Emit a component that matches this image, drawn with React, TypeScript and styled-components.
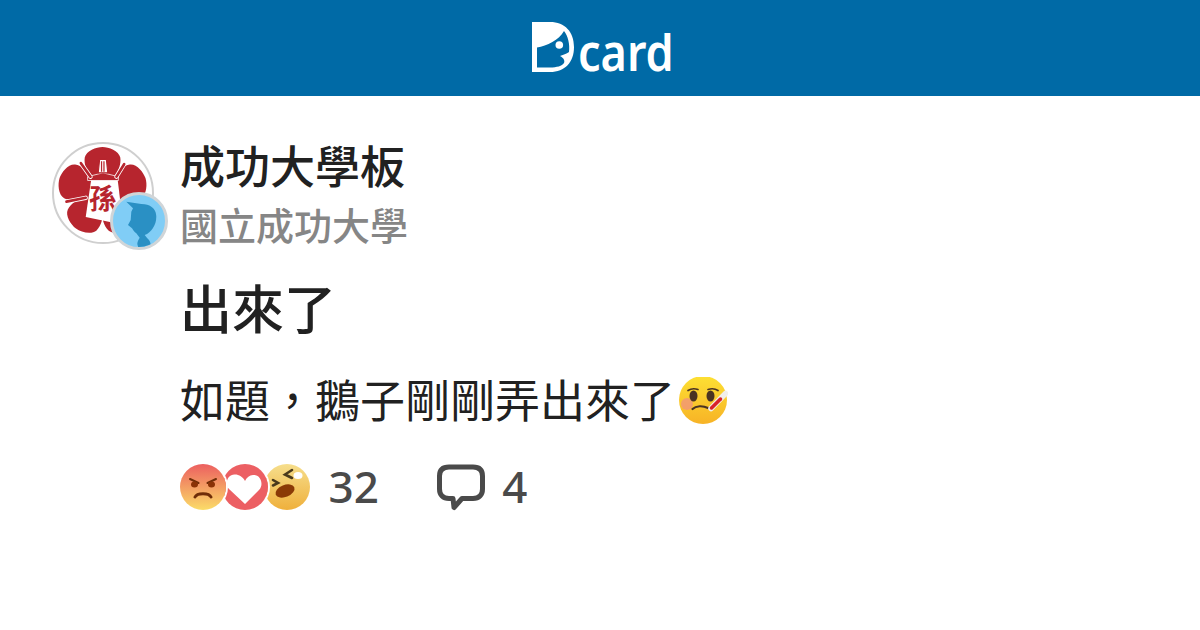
import React from "react";
import styled, { createGlobalStyle } from "styled-components";

const GlobalStyle = createGlobalStyle`
  html, body {
    margin: 0;
    padding: 0;
    background: #fff;
    font-family: "Noto Sans CJK TC", "Noto Sans", sans-serif;
  }
`;

const DcardLogo = () => (
  <LogoMark viewBox="0 0 42 50" aria-hidden="true">
    <path
      fill="#fff"
      fillRule="evenodd"
      d="M0 0H18C33 0 42 10 42 25C42 40 33 50 18 50H0ZM5 25.600V45.500H18C25 45.500 30 44 32 41C33 39 32 36 28 34C33 32 36 31 37 30C38 22 36 14 32 9C27 18 15 24 5 25.600Z"
    />
    <circle cx="27.300" cy="23" r="3.800" fill="#fff" />
  </LogoMark>
);

const SchoolLogo = () => (
  <svg viewBox="0 0 102 102" width="100%" height="100%" aria-hidden="true">
    {[0, 72, 144, 216, 288].map((deg) => (
      <path
        key={deg}
        transform={`rotate(${deg} 50.5 50)`}
        fill="#b7252e"
        d="M50.5 50C43 40 30 28 32 14C33.500 7 44 3 50.500 3C57 3 67.500 7 69 14C71 28 58 40 50.500 50Z"
      />
    ))}
    <path d="M39 35L66 35L72 84L33 76Z" fill="#fff" />
    <path d="M35 34L51 30L67 34L67 38L35 38Z" fill="#b7252e" stroke="#fff" strokeWidth="0.8" />
    <path d="M46 30L47.500 16H54.500L56 30Z" fill="#fff" stroke="#b7252e" strokeWidth="1.2" />
    <path d="M49.500 18V29M52 18V29" stroke="#b7252e" strokeWidth="1.300" />
    <path
      d="M28 20L38 34M73 21L65 34M13 60L33 56"
      stroke="#fff"
      strokeWidth="4.500"
      strokeLinecap="round"
    />
    <path
      d="M28 20L38 34M73 21L65 34M13 60L33 56"
      stroke="#b7252e"
      strokeWidth="2.800"
      strokeLinecap="round"
    />
    <text
      x="51"
      y="68"
      textAnchor="middle"
      fontSize="29"
      fontWeight="700"
      fill="#b7252e"
      fontFamily="'Noto Sans CJK TC', sans-serif"
    >
      孫
    </text>
  </svg>
);

const UserSilhouette = () => (
  <svg viewBox="0 0 52 52" width="100%" height="100%" aria-hidden="true">
    <path
      fill="#2a90c4"
      d="M13.300 6.700L28.300 9C33 9 36 10 38.300 11.700C42 14 43.300 18 43.300 21.700C43.300 26 42 30 40 33C38 36 35 39 31.700 40L34.300 43.300C36 45 37.700 47 37.700 50L35.700 54H25.700L24.300 49C24.300 47 25.500 44.500 26.700 42.700L23.300 38.300C21.500 37 20 35 19 33.300L15 30L17.700 25L18.300 16.700L20 13.300Z"
    />
  </svg>
);

const AngryFace = () => (
  <svg viewBox="0 0 46 46" width="100%" height="100%" aria-hidden="true">
    <defs>
      <linearGradient id="angry" x1="0" y1="0" x2="0" y2="1">
        <stop offset="0" stopColor="#ec5f60" />
        <stop offset="1" stopColor="#fbdc68" />
      </linearGradient>
    </defs>
    <circle cx="23" cy="23" r="23" fill="url(#angry)" />
    <path d="M10 15L18.500 19M36 15L27.500 19" stroke="#6f2d08" strokeWidth="2" strokeLinecap="round" />
    <ellipse cx="14.500" cy="20.500" rx="3.500" ry="3" fill="#8a3206" />
    <ellipse cx="31.500" cy="20.500" rx="3.500" ry="3" fill="#8a3206" />
    <path d="M15 33C17 28.500 29 28.500 31 33" fill="none" stroke="#6f2d08" strokeWidth="3" strokeLinecap="round" />
  </svg>
);

const HeartFace = () => (
  <svg viewBox="0 0 46 46" width="100%" height="100%" aria-hidden="true">
    <circle cx="23" cy="23" r="23" fill="#ec5f63" />
    <path
      fill="#fff"
      d="M23 40L7 25C2 19 6 10 13 10.500C17 10.500 21 13 23 17C25 13 28 10.500 32 11C39 11 42 21 37 26Z"
    />
  </svg>
);

const LaughFace = () => (
  <svg viewBox="0 0 46 46" width="100%" height="100%" aria-hidden="true">
    <defs>
      <linearGradient id="laugh" x1="0" y1="0" x2="0" y2="1">
        <stop offset="0" stopColor="#f6de8c" />
        <stop offset="1" stopColor="#efb03c" />
      </linearGradient>
    </defs>
    <circle cx="23" cy="23" r="23" fill="url(#laugh)" />
    <ellipse cx="34" cy="11.500" rx="4.500" ry="3.500" fill="#fff" />
    <path d="M28 6L21 10.500L28 14M9 16L14 19L9 21.500" fill="none" stroke="#4a3a1c" strokeWidth="2.600" strokeLinecap="round" />
    <ellipse cx="21" cy="27" rx="10" ry="6" transform="rotate(-22 21 27)" fill="#8a3a06" />
  </svg>
);

const FeverFace = () => (
  <svg viewBox="0 0 50 50" width="100%" height="100%" aria-hidden="true">
    <defs>
      <linearGradient id="fever" x1="0" y1="0" x2="0" y2="1">
        <stop offset="0" stopColor="#fde033" />
        <stop offset="1" stopColor="#f7b326" />
      </linearGradient>
    </defs>
    <circle cx="25" cy="23" r="24" fill="url(#fever)" />
    <circle cx="9" cy="27" r="6" fill="#ef8a8a" opacity="0.65" />
    <ellipse cx="15.500" cy="19" rx="4" ry="5.500" fill="#4a3322" />
    <ellipse cx="32.500" cy="19" rx="4" ry="5.500" fill="#4a3322" />
    <path d="M10 13.500C13 11.500 17 11.500 20 12.500M30 12.500C33 11.500 37 11.500 40 13.500" fill="none" stroke="#4a3322" strokeWidth="1.700" strokeLinecap="round" />
    <path d="M14.500 32C18 28.500 25 28.500 30 31" fill="none" stroke="#4a3322" strokeWidth="2.200" strokeLinecap="round" />
    <path d="M47.500 16.500L33 31.500" stroke="#f1efeb" strokeWidth="5.500" strokeLinecap="round" />
    <path d="M42.500 22L33.500 31" stroke="#d8232a" strokeWidth="3.500" strokeLinecap="round" />
  </svg>
);

const App = () => {
  const reactions = [AngryFace, HeartFace, LaughFace];
  return (
    <Page>
      <GlobalStyle />
      <Header>
        <Logo>
          <DcardLogo />
          <LogoText>card</LogoText>
        </Logo>
      </Header>
      <Content>
        <AvatarColumn>
          <Avatar>
            <SchoolLogo />
          </Avatar>
          <SmallAvatar>
            <UserSilhouette />
          </SmallAvatar>
        </AvatarColumn>
        <Main>
          <ForumName>成功大學板</ForumName>
          <SchoolName>國立成功大學</SchoolName>
          <Title>出來了</Title>
          <Excerpt>
            如題，鵝子剛剛弄出來了
            <InlineEmoji>
              <FeverFace />
            </InlineEmoji>
          </Excerpt>
          <Stats>
            <Reactions>
              {reactions.map((Face, i) => (
                <Reaction key={i} $order={reactions.length - i}>
                  <Face />
                </Reaction>
              ))}
            </Reactions>
            <Count>32</Count>
            <CommentIcon viewBox="0 0 50 48" aria-hidden="true">
              <path
                d="M13 4H37C43 4 46.500 7 46.500 13V26C46.500 32 43 35.500 37 35.500H26L18 44.500L17 35.500H13C7 35.500 3.500 32 3.500 26V13C3.500 7 7 4 13 4Z"
                fill="none"
                stroke="#4a4a4a"
                strokeWidth="5"
                strokeLinejoin="round"
              />
            </CommentIcon>
            <CommentCount>4</CommentCount>
          </Stats>
        </Main>
      </Content>
    </Page>
  );
};

export default App;

const Page = styled.div`
  width: 1200px;
  height: 630px;
  overflow: hidden;
  background: #fff;
`;

const Header = styled.header`
  height: 96px;
  background: #006aa6;
  display: flex;
  justify-content: center;
  align-items: flex-start;
`;

const Logo = styled.div`
  display: flex;
  align-items: flex-end;
  height: 50px;
  margin-top: 22px;
  margin-left: 1px;
`;

const LogoMark = styled.svg`
  width: 42px;
  height: 50px;
  display: block;
`;

const LogoText = styled.span`
  display: block;
  width: 91px;
  margin-left: 4px;
  font-family: "Noto Sans", sans-serif;
  font-size: 50px;
  line-height: 40px;
  font-weight: 600;
  white-space: nowrap;
  color: #fff;
  transform: scaleX(0.9);
  transform-origin: left center;
`;

const Content = styled.div`
  display: flex;
  padding: 46px 0 0 52px;
`;

const AvatarColumn = styled.div`
  position: relative;
  width: 102px;
  height: 102px;
  flex: none;
`;

const Avatar = styled.div`
  box-sizing: border-box;
  width: 102px;
  height: 102px;
  border-radius: 50%;
  border: 2px solid #cfcfcf;
  background: #fff;
  overflow: hidden;
`;

const SmallAvatar = styled.div`
  position: absolute;
  left: 58px;
  top: 50px;
  box-sizing: border-box;
  width: 58px;
  height: 58px;
  border-radius: 50%;
  border: 3px solid #d0d5d8;
  background: #80cdf6;
  overflow: hidden;
`;

const Main = styled.div`
  margin: -6px 0 0 26px;
  display: flex;
  flex-direction: column;
`;

const ForumName = styled.div`
  font-size: 45px;
  line-height: 58px;
  font-weight: 500;
  color: #212121;
`;

const SchoolName = styled.div`
  margin-top: 1px;
  font-size: 38px;
  line-height: 58px;
  color: #868686;
  font-weight: 500;
`;

const Title = styled.h1`
  margin: 20px 0 0;
  font-size: 52px;
  line-height: 68px;
  font-weight: 500;
  color: #212121;
`;

const Excerpt = styled.p`
  margin: 24px 0 0;
  display: flex;
  align-items: center;
  font-size: 45px;
  line-height: 68px;
  font-weight: 400;
  color: #212121;
`;

const InlineEmoji = styled.span`
  display: block;
  width: 50px;
  height: 50px;
  margin-left: 3px;
`;

const Stats = styled.div`
  margin-top: 31px;
  display: flex;
  align-items: center;
  height: 46px;
`;

const Reactions = styled.div`
  display: flex;
`;

const Reaction = styled.span<{ $order: number }>`
  position: relative;
  z-index: ${(p) => p.$order};
  display: block;
  width: 46px;
  height: 46px;
  border-radius: 50%;
  margin-left: -4px;
  box-shadow: 0 0 0 2px #fff;

  &:first-child {
    margin-left: 0;
  }
`;

const Count = styled.span`
  margin: 0 0 3px 18.500px;
  font-family: "Noto Sans", sans-serif;
  font-size: 44px;
  line-height: 46px;
  font-weight: 500;
  color: #4a4a4a;
`;

const CommentIcon = styled.svg`
  width: 50px;
  height: 48px;
  margin-left: 57.500px;
  display: block;
`;

const CommentCount = styled.span`
  margin: 0 0 3px 16px;
  font-family: "Noto Sans", sans-serif;
  font-size: 44px;
  line-height: 46px;
  font-weight: 500;
  color: #4a4a4a;
`;
